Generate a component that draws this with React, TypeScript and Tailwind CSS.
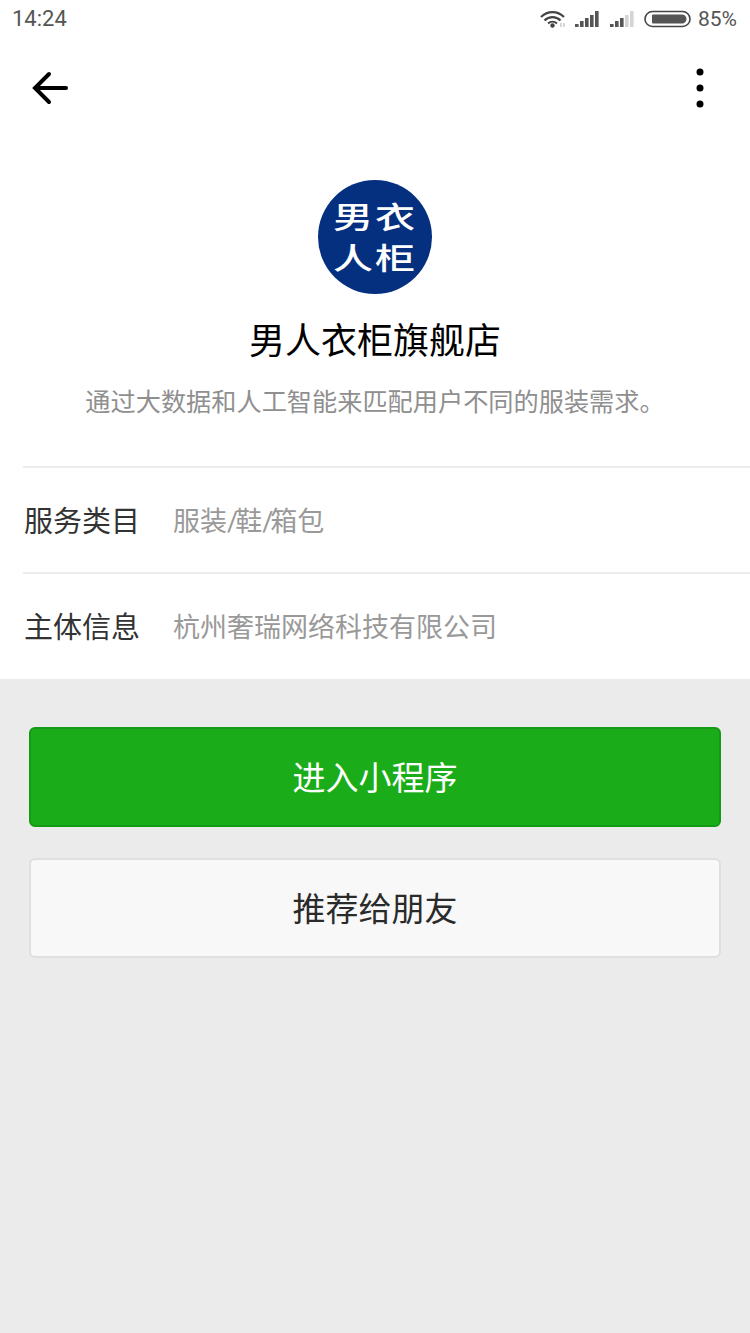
import React from "react";

const cjk = { fontFamily: '"Roboto","Noto Sans CJK SC",sans-serif' };

function Wifi() {
  return (
    <svg width="26" height="18" viewBox="0 0 26 18" fill="none" stroke="#444" strokeWidth="2.200">
      <path d="M1 7C7.500 .5 17.500 .5 24 7" />
      <path d="M4.500 10.500C9 6 16 6 20.500 10.500" />
      <path d="M8 13.500C10.500 11 14.500 11 17 13.500" strokeWidth="1.800" />
      <circle cx="12.500" cy="15.500" r="2.200" fill="#444" stroke="none" />
      <path d="M21 13v4M24 13v4" stroke="#bbb" strokeWidth="1.200" />
    </svg>
  );
}

function Signal({ level }: { level: number }) {
  const bars = [3, 6, 9, 12, 16];
  return (
    <svg width="25" height="18" viewBox="0 0 25 18">
      {bars.map((h, i) => (
        <rect key={i} x={i * 5} y={17 - h} width="3.600" height={h} fill={i < level ? "#555" : "#d4d4d4"} />
      ))}
    </svg>
  );
}

function Battery() {
  return (
    <svg width="47" height="18" viewBox="0 0 47 18">
      <rect x="1" y="1.500" width="45" height="15" rx="7.500" fill="none" stroke="#444" strokeWidth="1.600" />
      <path d="M9 4.500H38a4.500 4.500 0 0 1 0 9H9a1 1 0 0 1-1-1V5.500a1 1 0 0 1 1-1Z" fill="#555" />
    </svg>
  );
}

function Row({ label, children }: { label: string; children: React.ReactNode }) {
  return (
    <div className="ml-[23px] flex h-[106px] items-center border-t-2 border-[#ececec] pt-[5px]">
      <div className="w-[150px] pl-px text-[29px] leading-none text-[#333]">{label}</div>
      <div className="text-[27px] leading-none text-[#999]">{children}</div>
    </div>
  );
}

export default function App() {
  return (
    <div className="flex min-h-[1333px] w-[750px] flex-col bg-[#ebebeb]" style={cjk}>
      <div className="h-[679px] bg-white">
        <div className="flex h-[38px] items-center justify-between pl-[12px] pr-[13px]">
          <span className="text-[22px] leading-none text-[#555]">14:24</span>
          <div className="flex items-center">
            <Wifi />
            <div className="ml-[9px]"><Signal level={5} /></div>
            <div className="ml-[10px]"><Signal level={3} /></div>
            <div className="ml-[9px]"><Battery /></div>
            <span className="ml-[7px] text-[21px] leading-none text-[#555]">85%</span>
          </div>
        </div>
        <div className="flex h-[100px] items-center justify-between pl-[32px] pr-[46px]">
          <svg width="36" height="34" viewBox="0 0 36 34" fill="none" stroke="#000" strokeWidth="4" strokeLinecap="round">
            <path d="M34 17H4M17 3 3 17 17 31" />
          </svg>
          <svg width="8" height="40" viewBox="0 0 8 40" fill="#000">
            <circle cx="4" cy="4" r="3.500" />
            <circle cx="4" cy="20" r="3.500" />
            <circle cx="4" cy="36" r="3.500" />
          </svg>
        </div>
        <div className="mt-[42px] flex flex-col items-center">
          <div className="flex h-[114px] w-[114px] flex-col items-center justify-center rounded-full bg-[#04307f] pt-[2px] text-[40px] font-medium leading-[41px] text-white">
            <div className="scale-y-[0.75] tracking-[2px]">男衣</div>
            <div className="scale-y-[0.75] tracking-[2px]">人柜</div>
          </div>
          <h1 className="mt-[25px] text-[36px] font-normal leading-[46px] text-black">男人衣柜旗舰店</h1>
          <p className="mt-[22px] text-[25.200px] leading-[32px] text-[#8f8f8f]">通过大数据和人工智能来匹配用户不同的服装需求。</p>
        </div>
        <div className="mt-[47px]">
          <Row label="服务类目">
            服装<span className="tracking-[-3px]">/</span>鞋<span className="tracking-[-3px]">/</span>箱包
          </Row>
          <Row label="主体信息">杭州奢瑞网络科技有限公司</Row>
        </div>
      </div>
      <div className="flex flex-col gap-[31px] px-[29px] pt-[48px]">
        <button className="flex h-[100px] items-center justify-center rounded-[6px] border-2 border-[#159a15] bg-[#1aad19] pt-[3px] text-[33px] text-white">
          进入小程序
        </button>
        <button className="flex h-[100px] items-center justify-center rounded-[6px] border-2 border-[#dfdfdf] bg-[#f8f8f8] pt-[3px] text-[33px] text-[#2a2a2a]">
          推荐给朋友
        </button>
      </div>
    </div>
  );
}
